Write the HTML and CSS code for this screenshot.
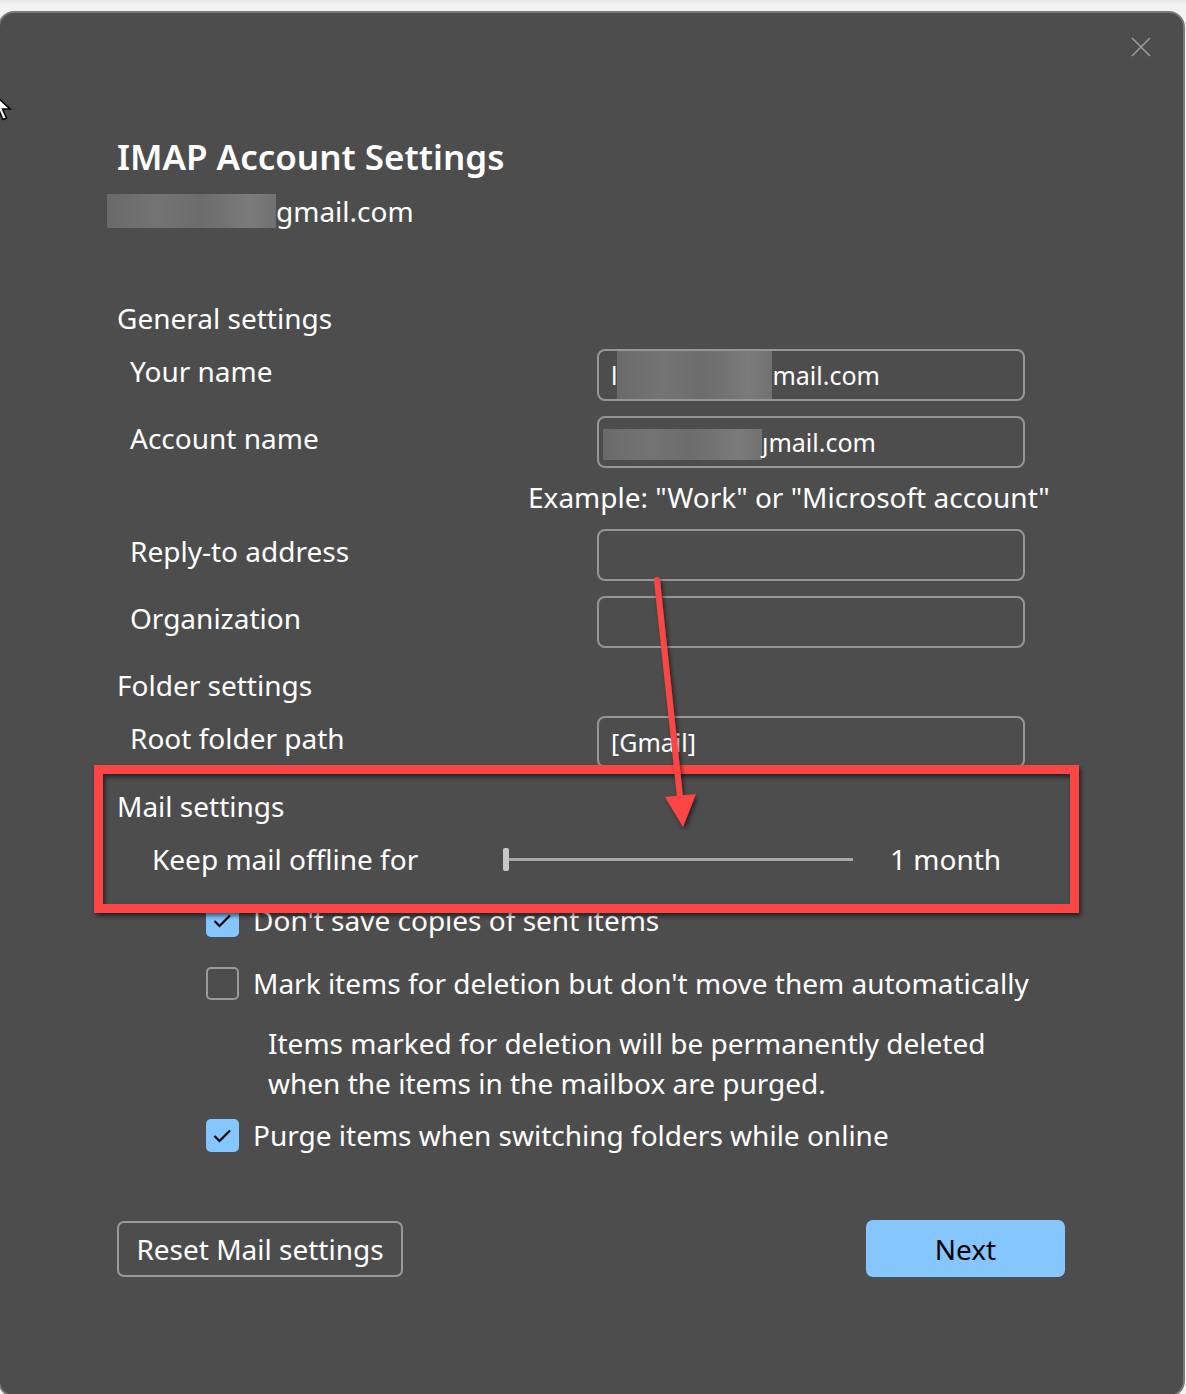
FILE: index.html
```html
<!DOCTYPE html>
<html lang="en">
<head>
<meta charset="UTF-8">
<meta name="viewport" content="width=device-width, initial-scale=1.0">
<title>IMAP Account Settings</title>
<link rel="stylesheet" href="styles.css">
</head>
<body>
<div class="dialog">
    <div class="topbar">
        <svg class="close" width="20" height="20" viewBox="0 0 20 20">
            <path d="M1 1 L19 19 M19 1 L1 19" stroke="#9a9a9a" stroke-width="1.6" fill="none"/>
        </svg>
    </div>
    <h1 class="title">IMAP Account Settings</h1>
    <div class="account"><span class="blur blur-account"></span>gmail.com</div>

    <div class="group-title general">General settings</div>
    <div class="field first">
        <div class="label">Your name</div>
        <div class="input">l<span class="blur blur-name"></span>mail.com</div>
    </div>
    <div class="field">
        <div class="label">Account name</div>
        <div class="input"><span class="blur blur-acc"></span>ȷmail.com</div>
    </div>
    <div class="example">Example: "Work" or "Microsoft account"</div>
    <div class="field reply">
        <div class="label">Reply-to address</div>
        <div class="input"></div>
    </div>
    <div class="field">
        <div class="label">Organization</div>
        <div class="input"></div>
    </div>

    <div class="group-title folder">Folder settings</div>
    <div class="field first">
        <div class="label">Root folder path</div>
        <div class="input">[Gmail]</div>
    </div>

    <div class="group-title mail">Mail settings</div>
    <div class="offline">
        <div class="offline-label">Keep mail offline for</div>
        <div class="slider"><span class="thumb"></span><span class="track"></span></div>
        <div class="offline-value">1 month</div>
    </div>

    <div class="check-row first-check">
        <span class="checkbox checked">
            <svg width="33" height="33" viewBox="0 0 33 33"><path d="M8.5 17 L13.5 22 L24 11.5" stroke="#000" stroke-width="2.2" fill="none"/></svg>
        </span>
        <span>Don't save copies of sent items</span>
    </div>
    <div class="check-row mark">
        <span class="checkbox"></span>
        <span>Mark items for deletion but don't move them automatically</span>
    </div>
    <div class="note">Items marked for deletion will be permanently deleted<br>when the items in the mailbox are purged.</div>
    <div class="check-row purge">
        <span class="checkbox checked">
            <svg width="33" height="33" viewBox="0 0 33 33"><path d="M8.5 17 L13.5 22 L24 11.5" stroke="#000" stroke-width="2.2" fill="none"/></svg>
        </span>
        <span>Purge items when switching folders while online</span>
    </div>

    <div class="actions">
        <button class="btn btn-reset">Reset Mail settings</button>
        <button class="btn btn-next">Next</button>
    </div>
</div>

<!-- screenshot annotation on top of the dialog -->
<svg class="annotation" width="1186" height="1394" viewBox="0 0 1186 1394">
    <defs>
        <filter id="shadow" x="-10%" y="-10%" width="120%" height="130%">
            <feDropShadow dx="2" dy="3" stdDeviation="2" flood-color="#000" flood-opacity="0.55"/>
        </filter>
    </defs>
    <rect x="98.5" y="769.5" width="976" height="139" fill="none" stroke="#fc4444" stroke-width="9" filter="url(#shadow)"/>
    <g filter="url(#shadow)">
        <line x1="657" y1="580" x2="680" y2="797" stroke="#fc4444" stroke-width="6" stroke-linecap="round"/>
        <polygon points="665,797 696,794 683,827" fill="#fc4444"/>
    </g>
</svg>

<svg class="cursor" width="24" height="32" viewBox="0 0 24 32">
    <path d="M1 1 L1 24 L7 18.5 L11 27.5 L14.5 26 L10.5 17 L18 17 Z" fill="#fff" stroke="#000" stroke-width="1.6"/>
</svg>
</body>
</html>
```

FILE: styles.css
```css
body {
    margin: 0;
    width: 1186px;
    height: 1394px;
    overflow: hidden;
    position: relative;
    font-family: "Noto Sans", "Open Sans", sans-serif;
    font-size: 28px;
    color: #fff;
    background: linear-gradient(#e6e6e6 0, #f3f3f3 5px);
}

.dialog {
    margin: 11px 0 0 -2px;
    width: 1187px;
    height: 1386px;
    background-color: #4d4d4d;
    border: 2px solid #7b7b7b;
    border-radius: 16px;
    padding-left: 117px;
    box-sizing: border-box;
}

.topbar {
    height: 124px;
    display: flex;
    justify-content: flex-end;
    align-items: flex-start;
    padding: 24px 32px 0 0;
    box-sizing: border-box;
}

.title {
    margin: 0;
    font-size: 35px;
    font-weight: 600;
    line-height: 40px;
}

.account {
    margin-top: 16px;
    line-height: 36px;
    display: flex;
    align-items: center;
}

.blur {
    display: inline-block;
    background: linear-gradient(90deg, #6a6a6a 0%, #747474 30%, #6c6c6c 55%, #7b7b7b 85%, #717171 100%);
}

.blur-account {
    width: 169px;
    height: 34px;
    margin-left: -10px;
}

.group-title {
    line-height: 40px;
}

.general { margin-top: 69px; }
.folder { margin-top: 17px; }
.mail { margin-top: 18px; }

.field {
    display: grid;
    grid-template-columns: 480px 428px;
    height: 52px;
    margin-top: 15px;
}

.field.first { margin-top: 11px; }
.field.reply { margin-top: 14px; }

.label {
    padding-left: 13px;
    line-height: 44px;
}

.input {
    height: 52px;
    border: 2px solid #969696;
    border-radius: 8px;
    box-sizing: border-box;
    padding-left: 12px;
    display: flex;
    align-items: center;
    font-size: 25px;
}

.blur-name {
    width: 155px;
    height: 48px;
    align-self: flex-end;
}

.blur-acc {
    width: 159px;
    height: 31px;
    margin: 4px 0 0 -8px;
}

.example {
    margin-top: 11px;
    padding-left: 411px;
    line-height: 36px;
    white-space: nowrap;
}

.offline {
    margin-top: 11px;
    height: 44px;
    display: grid;
    grid-template-columns: 386px 350px auto;
    align-items: center;
}

.offline-label {
    padding-left: 35px;
}

.slider {
    display: flex;
    align-items: center;
}

.thumb {
    width: 6px;
    height: 23px;
    border-radius: 2px;
    background-color: #c8c8c8;
}

.track {
    flex: 1;
    height: 3px;
    background-color: #a8a8a8;
}

.offline-value {
    padding-left: 37px;
}

.check-row {
    display: flex;
    align-items: center;
    gap: 14px;
    padding-left: 89px;
    height: 44px;
}

.first-check { margin-top: 17px; }
.mark { margin-top: 19px; }
.purge { margin-top: 10px; }

.checkbox {
    width: 33px;
    height: 33px;
    border: 2px solid #9a9a9a;
    border-radius: 5px;
    box-sizing: border-box;
    flex-shrink: 0;
}

.checkbox.checked {
    border: none;
    background-color: #84c6fd;
}

.checkbox svg {
    display: block;
}

.note {
    margin-top: 18px;
    padding-left: 151px;
    line-height: 40px;
}

.actions {
    margin-top: 63px;
    width: 948px;
    display: flex;
    justify-content: space-between;
    align-items: flex-start;
}

.btn {
    font-family: "Noto Sans", "Open Sans", sans-serif;
    font-size: 28px;
    border-radius: 7px;
    cursor: pointer;
}

.btn-reset {
    width: 286px;
    height: 56px;
    margin-top: 1px;
    background-color: #4d4d4d;
    color: #fff;
    border: 2px solid #999;
}

.btn-next {
    width: 199px;
    height: 57px;
    background-color: #84c6fd;
    color: #000;
    border: none;
}

.annotation {
    position: absolute;
    left: 0;
    top: 0;
    pointer-events: none;
}

.cursor {
    position: absolute;
    left: -8px;
    top: 92px;
    pointer-events: none;
}
```
